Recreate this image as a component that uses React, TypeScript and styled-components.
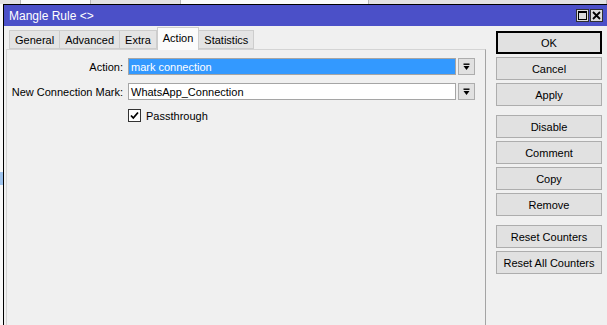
import React from "react";
import styled, { createGlobalStyle } from "styled-components";

const GlobalStyle = createGlobalStyle`
  html, body {
    margin: 0;
    padding: 0;
    background: #f0f0f0;
  }
  body {
    font-family: "Liberation Sans", Arial, sans-serif;
    font-size: 11px;
    color: #000;
  }
`;

const tabs = ["General", "Advanced", "Extra", "Action", "Statistics"];

const buttonGroups = [
  ["OK", "Cancel", "Apply"],
  ["Disable", "Comment", "Copy", "Remove"],
  ["Reset Counters", "Reset All Counters"],
];

const DropIcon = () => (
  <svg width="9" height="8" viewBox="0 0 9 8">
    <rect x="1.5" y="0.5" width="6" height="1.4" fill="#000" />
    <path d="M1.5 3 L7.5 3 L4.5 7 Z" fill="#000" />
  </svg>
);

const CheckIcon = () => (
  <svg width="11" height="11" viewBox="0 0 11 11">
    <path d="M2 5.5 L4.3 8 L9 2.5" stroke="#000" strokeWidth="1.8" fill="none" />
  </svg>
);

const App = () => {
  return (
    <Page>
      <GlobalStyle />
      <BackStrip>
        <BackCell $w={20} />
        <BackCell $w={70} $light />
        <BackCell $w={90} />
        <BackCell $w={190} $light />
        <BackCell $w={240} />
      </BackStrip>
      <Stage>
        <LeftStrip>
          <StripCell $h={168} />
          <StripCell $h={13} $blue />
          <StripCell $h={200} />
        </LeftStrip>
        <Window>
          <TitleBar>
            <span>Mangle Rule &lt;&gt;</span>
            <TitleButtons>
              <TitleButton>
                <svg width="9" height="9" viewBox="0 0 9 9">
                  <rect x="0.5" y="0.5" width="8" height="8" fill="none" stroke="#000" />
                  <rect x="0.5" y="0.5" width="8" height="1.5" fill="#000" />
                </svg>
              </TitleButton>
              <TitleButton>
                <svg width="9" height="9" viewBox="0 0 9 9">
                  <path d="M1 1 L8 8 M8 1 L1 8" stroke="#000" strokeWidth="1.8" />
                </svg>
              </TitleButton>
            </TitleButtons>
          </TitleBar>
          <Body>
            <LeftPane>
              <TabRow>
                {tabs.map((t) => (
                  <Tab key={t} $active={t === "Action"}>
                    {t}
                  </Tab>
                ))}
              </TabRow>
              <Panel>
                <Form>
                  <Label>Action:</Label>
                  <Field $selected>mark connection</Field>
                  <DropButton>
                    <DropIcon />
                  </DropButton>
                  <Label>New Connection Mark:</Label>
                  <Field>WhatsApp_Connection</Field>
                  <DropButton>
                    <DropIcon />
                  </DropButton>
                  <span />
                  <CheckRow>
                    <CheckBox>
                      <CheckIcon />
                    </CheckBox>
                    Passthrough
                  </CheckRow>
                </Form>
              </Panel>
            </LeftPane>
            <RightPane>
              {buttonGroups.map((group, i) => (
                <ButtonGroup key={i}>
                  {group.map((b) => (
                    <Button key={b} $default={b === "OK"}>
                      {b}
                    </Button>
                  ))}
                </ButtonGroup>
              ))}
            </RightPane>
          </Body>
        </Window>
      </Stage>
    </Page>
  );
};

export default App;

const Page = styled.div`
  width: 607px;
  height: 325px;
  overflow: hidden;
  display: flex;
  flex-direction: column;
  background: #f0f0f0;
`;

const BackStrip = styled.div`
  height: 4px;
  display: flex;
  background: #e6e6e6;
`;

const BackCell = styled.div<{ $w: number; $light?: boolean }>`
  width: ${(p) => p.$w}px;
  background: ${(p) => (p.$light ? "#fafafa" : "#e2e2e2")};
  border-right: 1px solid #b8b8b8;
`;

const Stage = styled.div`
  flex: 1;
  display: flex;
  min-height: 0;
`;

const LeftStrip = styled.div`
  width: 3px;
  display: flex;
  flex-direction: column;
  background: #fafafa;
`;

const StripCell = styled.div<{ $h: number; $blue?: boolean }>`
  height: ${(p) => p.$h}px;
  flex-shrink: 0;
  background: ${(p) => (p.$blue ? "#9fc4ee" : "#f8f8f8")};
`;

const Window = styled.div`
  flex: 1;
  height: 340px;
  display: flex;
  flex-direction: column;
  border-left: 1px solid #000;
  border-top: 1px solid #000;
  background: #f0f0f0;
`;

const TitleBar = styled.div`
  height: 21px;
  flex-shrink: 0;
  display: flex;
  align-items: center;
  justify-content: space-between;
  padding: 0 4px 0 5px;
  background: #4b50c8;
  color: #fff;
  font-size: 12px;
`;

const TitleButtons = styled.div`
  display: flex;
  gap: 1px;
`;

const TitleButton = styled.div`
  width: 13px;
  height: 13px;
  display: flex;
  align-items: center;
  justify-content: center;
  background: #dcdcdc;
  border: 1px solid #303030;
  box-sizing: border-box;
`;

const Body = styled.div`
  flex: 1;
  display: flex;
`;

const LeftPane = styled.div`
  width: 482px;
  display: flex;
  flex-direction: column;
`;

const TabRow = styled.div`
  height: 23px;
  display: flex;
  align-items: flex-end;
  padding-left: 5px;
  position: relative;
  z-index: 1;
`;

const Tab = styled.div<{ $active?: boolean }>`
  height: ${(p) => (p.$active ? "23px" : "19px")};
  margin-bottom: ${(p) => (p.$active ? "-1px" : "0")};
  padding: 0 5px;
  display: flex;
  align-items: center;
  box-sizing: border-box;
  border: 1px solid #cdcdcd;
  border-bottom: ${(p) => (p.$active ? "none" : "1px solid #cdcdcd")};
  border-left: ${(p) => (p.$active ? "1px solid #cdcdcd" : "none")};
  background: ${(p) => (p.$active ? "#fbfbfb" : "#e4e4e4")};
  padding-bottom: ${(p) => (p.$active ? "3px" : "0")};
  &:first-child {
    border-left: 1px solid #cdcdcd;
  }
`;

const Panel = styled.div`
  flex: 1;
  margin-left: 2px;
  border: 1px solid #d4d4d4;
  border-right: 1px solid #a4a4a4;
  background: #f0f0f0;
  padding-top: 8px;
`;

const Form = styled.div`
  display: grid;
  grid-template-columns: 116px 328px 17px;
  grid-template-rows: 17px 17px 15px;
  column-gap: 5px;
  row-gap: 8px;
  align-items: center;
  & > :nth-child(3n) {
    margin-left: -3px;
  }
`;

const Label = styled.div`
  text-align: right;
`;

const Field = styled.div<{ $selected?: boolean }>`
  height: 17px;
  box-sizing: border-box;
  border: 1px solid #a5a5a5;
  padding: 0 2px;
  display: flex;
  align-items: center;
  background: ${(p) => (p.$selected ? "#3399ff" : "#fff")};
  color: ${(p) => (p.$selected ? "#fff" : "#000")};
`;

const DropButton = styled.div`
  width: 17px;
  height: 17px;
  box-sizing: border-box;
  border: 1px solid #adadad;
  background: #e1e1e1;
  display: flex;
  align-items: center;
  justify-content: center;
`;

const CheckRow = styled.div`
  display: flex;
  align-items: center;
  gap: 5px;
`;

const CheckBox = styled.div`
  width: 13px;
  height: 13px;
  box-sizing: border-box;
  border: 1px solid #333;
  background: #fff;
  display: flex;
  align-items: center;
  justify-content: center;
`;

const RightPane = styled.div`
  display: flex;
  flex-direction: column;
  gap: 9px;
  padding: 5px 0 0 10px;
`;

const ButtonGroup = styled.div`
  display: flex;
  flex-direction: column;
  gap: 3px;
`;

const Button = styled.div<{ $default?: boolean }>`
  width: 106px;
  height: 23px;
  box-sizing: border-box;
  display: flex;
  align-items: center;
  justify-content: center;
  background: #e1e1e1;
  border: 1px solid ${(p) => (p.$default ? "#000" : "#adadad")};
  box-shadow: ${(p) => (p.$default ? "inset 0 0 0 1px #000" : "none")};
`;
